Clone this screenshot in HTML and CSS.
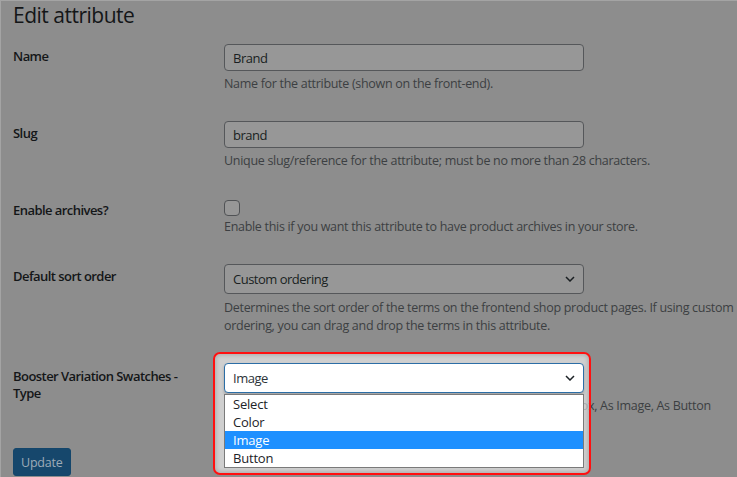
FILE: index.html
```html
<!DOCTYPE html>
<html>
<head>
<meta charset="utf-8">
<link rel="stylesheet" href="styles.css">
</head>
<body>
<div class="page">
  <h1 class="title">Edit attribute</h1>
  <div class="form">
    <div class="row">
      <div class="label">Name</div>
      <div class="field">
        <div class="input">Brand</div>
        <p class="desc">Name for the attribute (shown on the front-end).</p>
      </div>
    </div>
    <div class="row">
      <div class="label">Slug</div>
      <div class="field">
        <div class="input">brand</div>
        <p class="desc">Unique slug/reference for the attribute; must be no more than 28 characters.</p>
      </div>
    </div>
    <div class="row">
      <div class="label">Enable archives?</div>
      <div class="field">
        <div class="checkbox"></div>
        <p class="desc desc-check">Enable this if you want this attribute to have product archives in your store.</p>
      </div>
    </div>
    <div class="row">
      <div class="label">Default sort order</div>
      <div class="field">
        <div class="select">
          <span>Custom ordering</span>
          <svg class="chev" width="10" height="6" viewBox="0 0 10 6"><polyline points="1,1 5,5 9,1" fill="none" stroke="#1a1f22" stroke-width="1.5"/></svg>
        </div>
        <p class="desc desc-sort">Determines the sort order of the terms on the frontend shop product pages. If using custom<br>ordering, you can drag and drop the terms in this attribute.</p>
      </div>
    </div>
    <div class="row row-booster">
      <div class="label label-two">Booster Variation Swatches -<br>Type</div>
      <div class="field">
        <div class="spot-wrap">
          <div class="spotlight"></div>
          <div class="select select-open">
            <span>Image</span>
            <svg class="chev" width="10" height="6" viewBox="0 0 10 6"><polyline points="1,1 5,5 9,1" fill="none" stroke="#1d2327" stroke-width="1.5"/></svg>
          </div>
          <p class="desc">Select the swatches type: As Select, As Color, As Label, As Checkbox, As Image, As Button</p>
          <ul class="options">
            <li>Select</li>
            <li>Color</li>
            <li class="active">Image</li>
            <li>Button</li>
          </ul>
        </div>
      </div>
    </div>
  </div>
  <button class="btn">Update</button>
</div>
</body>
</html>
```

FILE: styles.css
```css
* { box-sizing: border-box; }

body {
  margin: 0;
  background: #8d8d8d;
  font-family: "Open Sans", "Noto Sans", sans-serif;
}

.page {
  min-height: 477px;
  border-top: 1px solid #a4a4a4;
  border-left: 1px solid #a4a4a4;
  padding: 0 12px;
  overflow: hidden;
}

.title {
  margin: 0;
  font-size: 21px;
  font-weight: 400;
  letter-spacing: -0.5px;
  line-height: 29px;
  color: #141618;
}

.row {
  display: grid;
  grid-template-columns: 211px 1fr;
  padding: 14px 0;
}

.label {
  font-size: 13px;
  font-weight: 600;
  letter-spacing: -0.55px;
  line-height: 18px;
  padding-top: 3px;
  color: #141618;
}

.label-two {
  line-height: 17px;
  padding-top: 5px;
}

.input,
.select {
  width: 360px;
  height: 27px;
  border: 1px solid #55575a;
  border-radius: 4px;
  background: #979797;
  padding: 0 8px;
  font-size: 13px;
  letter-spacing: -0.5px;
  color: #1a1f22;
  display: flex;
  align-items: center;
  justify-content: space-between;
}

.select {
  height: 30px;
}

.desc {
  margin: 4px 0 0;
  font-size: 12.5px;
  letter-spacing: -0.3px;
  line-height: 18px;
  color: #3c3f42;
  white-space: nowrap;
}

.desc-check { margin-top: 2px; }
.desc-sort { margin-top: 5px; }

.checkbox {
  width: 16px;
  height: 16px;
  margin-top: 2px;
  border: 1px solid #505255;
  border-radius: 4px;
  background: #979797;
}

.spot-wrap {
  position: relative;
}

.spotlight {
  position: absolute;
  top: -11px;
  left: -11px;
  width: 378px;
  height: 123px;
  border: 2px solid #ff1010;
  border-radius: 7px;
  background: rgba(255, 255, 255, 0.58);
  box-shadow: inset 0 0 4px 1px rgba(0, 0, 0, 0.18);
  z-index: 1;
}

.select-open {
  position: relative;
  z-index: 2;
  background: #fff;
  border-color: #2c6ea6;
  color: #2c3338;
  box-shadow: 0 2px 3px rgba(0, 0, 0, 0.22);
}

.options {
  position: absolute;
  top: 31px;
  left: 0;
  width: 360px;
  margin: 0;
  padding: 0;
  list-style: none;
  background: #fff;
  border: 1px solid #7a7a7a;
  z-index: 3;
}

.options li {
  height: 18px;
  line-height: 18px;
  padding-left: 8px;
  font-size: 13px;
  letter-spacing: -0.2px;
  color: #1d2327;
}

.options li.active {
  background: #1e90ff;
  color: #fff;
}

.btn {
  display: block;
  margin-top: 19px;
  height: 28px;
  padding: 0 7px;
  border: 1px solid #14466b;
  border-radius: 3px;
  background: #16476c;
  color: #9eabb8;
  font-family: "Open Sans", "Noto Sans", sans-serif;
  font-size: 12.5px;
  letter-spacing: -0.2px;
}
```
